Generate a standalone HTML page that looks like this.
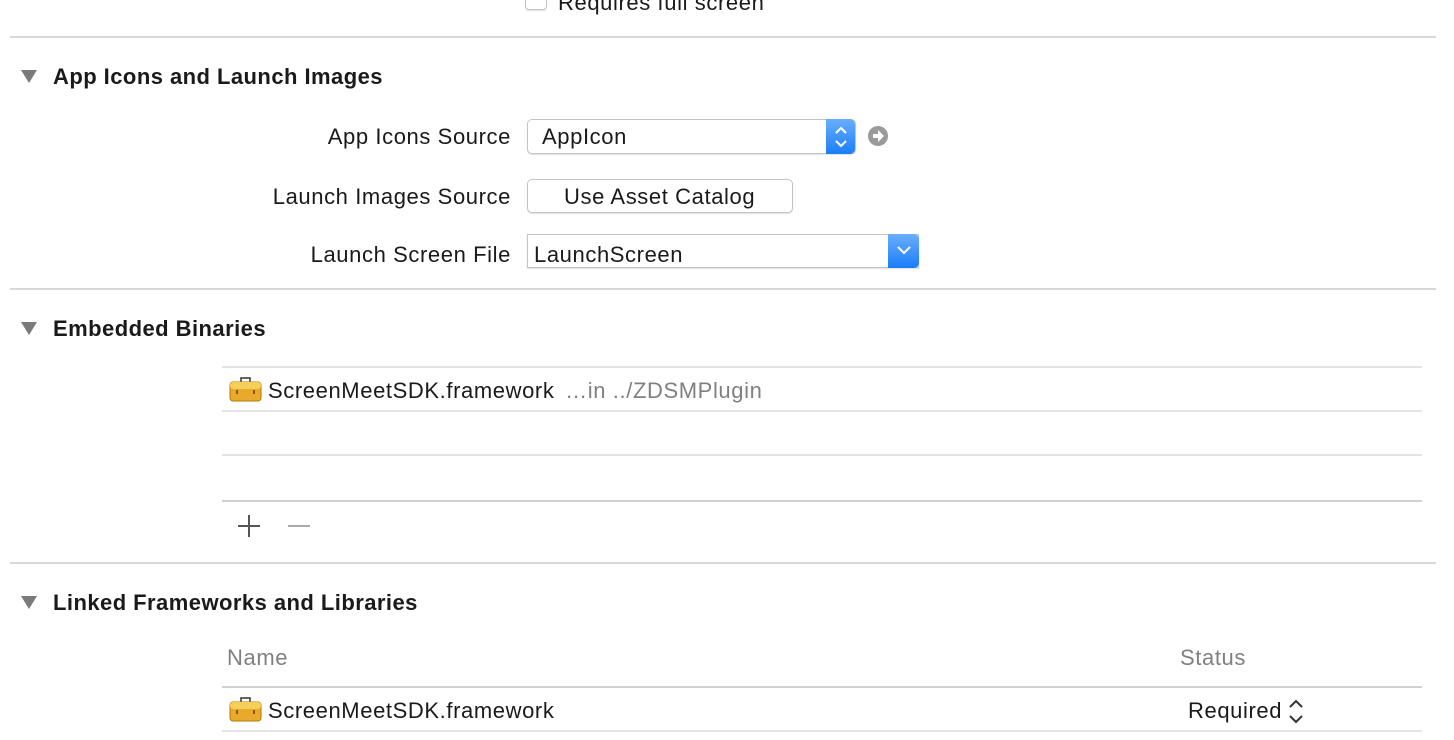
<!DOCTYPE html>
<html><head><style>
body{margin:0;width:1454px;height:740px;background:#fff;position:relative;overflow:hidden;font-family:"Liberation Sans",sans-serif;color:#1a1a1a;font-size:22px;letter-spacing:0.6px}
.a{position:absolute;white-space:nowrap}
.hl{position:absolute;height:2px;background:#d8d8d8}
.tl{position:absolute;height:2px;background:#e4e4e4;left:222px;width:1200px}
.h{font-weight:bold;font-size:22px;letter-spacing:0.45px}
.tri{position:absolute;width:0;height:0;border-left:8px solid transparent;border-right:8px solid transparent;border-top:13px solid #7a7a7a}
.r{text-align:right;width:300px}
.box{position:absolute;border:1px solid #c4c4c4;border-radius:5px;background:#fff;box-shadow:0 1px 1px rgba(0,0,0,.12)}
.blue{position:absolute;background:linear-gradient(#6aaefc,#1a7ef8);border-radius:0 5px 5px 0}
.tb{position:absolute;width:33px;height:26px}
</style></head><body>
<div class="box" style="left:525px;top:-12px;width:20px;height:20px;border-radius:4px"></div>
<div class="a" style="left:558px;top:-10px">Requires full screen</div>
<div class="hl" style="left:10px;top:36px;width:1426px"></div>

<div class="tri" style="left:21px;top:70px"></div>
<div class="a h" style="left:53px;top:64px">App Icons and Launch Images</div>
<div class="a r" style="left:211px;top:124px">App Icons Source</div>
<div class="box" style="left:527px;top:119px;width:327px;height:33px"></div>
<div class="blue" style="left:826px;top:119px;width:29px;height:35px"></div>
<svg class="a" style="left:832px;top:124px" width="18" height="26"><path d="M4 9l5-5 5 5M4 17l5 5 5-5" stroke="#fff" stroke-width="2" fill="none"/></svg>
<div class="a" style="left:542px;top:124px">AppIcon</div>
<svg class="a" style="left:867px;top:125px" width="22" height="22"><circle cx="11" cy="11" r="10" fill="#9a9a9a"/><path d="M6 9h5V5l6 6-6 6v-4H6z" fill="#fff"/></svg>

<div class="a r" style="left:211px;top:184px">Launch Images Source</div>
<div class="box" style="left:527px;top:179px;width:264px;height:32px"></div>
<div class="a" style="left:564px;top:184px">Use Asset Catalog</div>

<div class="a r" style="left:211px;top:242px">Launch Screen File</div>
<div class="box" style="left:527px;top:234px;width:390px;height:32px;border-radius:0"></div>
<div class="blue" style="left:888px;top:234px;width:31px;height:34px"></div>
<svg class="a" style="left:894px;top:240px" width="20" height="20"><path d="M4 7l6 6 6-6" stroke="#fff" stroke-width="2" fill="none"/></svg>
<div class="a" style="left:534px;top:242px">LaunchScreen</div>
<div class="hl" style="left:10px;top:288px;width:1426px"></div>

<div class="tri" style="left:21px;top:322px"></div>
<div class="a h" style="left:53px;top:316px">Embedded Binaries</div>
<div class="tl" style="top:366px"></div>
<svg class="tb" style="left:229px;top:376px" viewBox="0 0 33 26"><path d="M12 6V2h9v4" stroke="#333" stroke-width="1.5" fill="none"/><rect x="1" y="6" width="31" height="19" rx="3" fill="#e9a92a" stroke="#b07a10"/><rect x="1" y="6" width="31" height="7" rx="3" fill="#f6cf5a"/><rect x="7" y="14" width="2" height="4" fill="#8a5a00"/><rect x="24" y="14" width="2" height="4" fill="#8a5a00"/></svg>
<div class="a" style="left:268px;top:378px">ScreenMeetSDK.framework <span style="color:#808080;margin-left:4px">…in ../ZDSMPlugin</span></div>
<div class="tl" style="top:410px"></div>
<div class="tl" style="top:454px"></div>
<div class="tl" style="top:500px;background:#d0d0d0"></div>
<svg class="a" style="left:237px;top:514px" width="76" height="24"><path d="M12 1v22M1 12h22" stroke="#555" stroke-width="2"/><path d="M51 12h22" stroke="#aaa" stroke-width="2"/></svg>
<div class="hl" style="left:10px;top:562px;width:1426px"></div>

<div class="tri" style="left:21px;top:596px"></div>
<div class="a h" style="left:53px;top:590px">Linked Frameworks and Libraries</div>
<div class="a" style="left:227px;top:645px;color:#808080">Name</div>
<div class="a" style="left:1180px;top:645px;color:#808080">Status</div>
<div class="tl" style="top:686px;background:#d0d0d0"></div>
<svg class="tb" style="left:229px;top:696px" viewBox="0 0 33 26"><path d="M12 6V2h9v4" stroke="#333" stroke-width="1.5" fill="none"/><rect x="1" y="6" width="31" height="19" rx="3" fill="#e9a92a" stroke="#b07a10"/><rect x="1" y="6" width="31" height="7" rx="3" fill="#f6cf5a"/><rect x="7" y="14" width="2" height="4" fill="#8a5a00"/><rect x="24" y="14" width="2" height="4" fill="#8a5a00"/></svg>
<div class="a" style="left:268px;top:698px">ScreenMeetSDK.framework</div>
<div class="a" style="left:1188px;top:698px">Required</div>
<svg class="a" style="left:1287px;top:698px" width="18" height="28"><path d="M3 9l6-6 6 6M3 18l6 6 6-6" stroke="#333" stroke-width="2" fill="none"/></svg>
<div class="tl" style="top:730px"></div>
</body></html>
